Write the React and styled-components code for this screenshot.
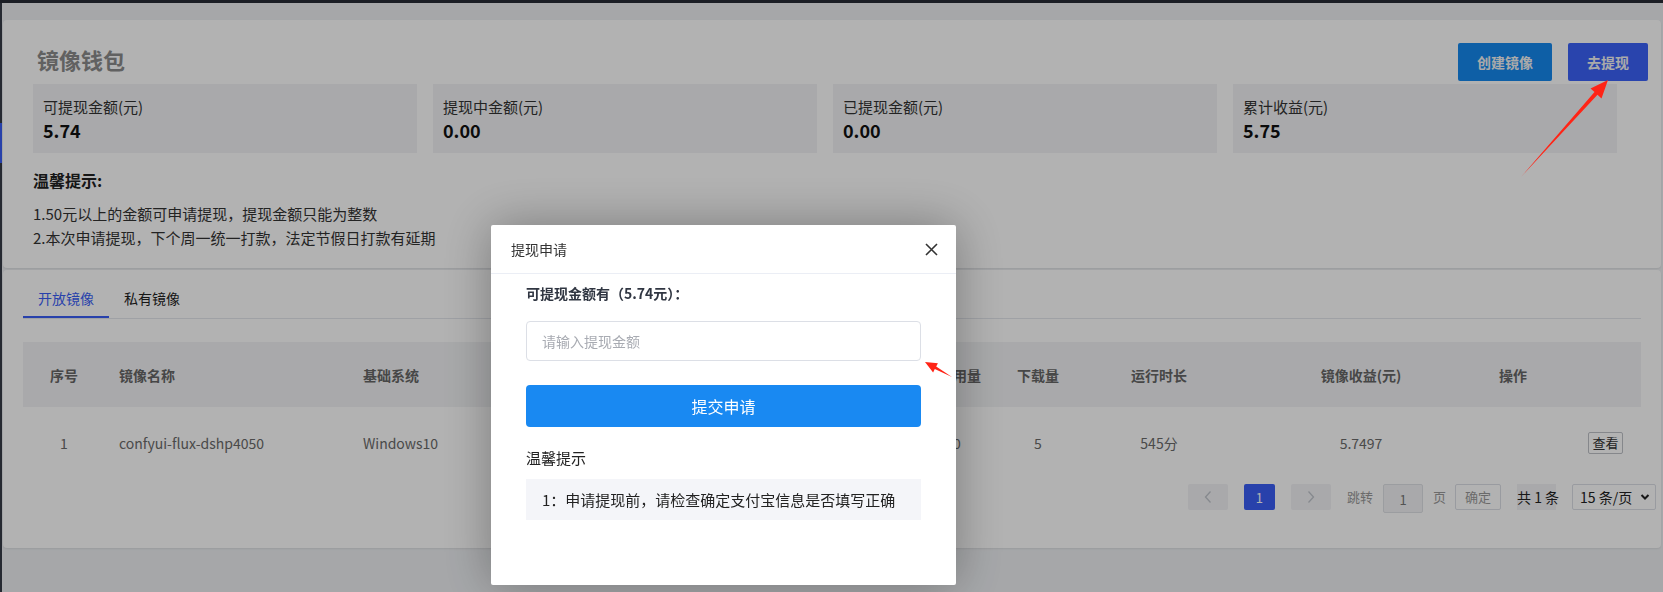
import React from "react";
import styled, { createGlobalStyle } from "styled-components";

const GlobalStyle = createGlobalStyle`
  html, body { margin: 0; padding: 0; }
  body {
    width: 1663px;
    height: 592px;
    overflow: hidden;
    background: #eef0f3;
    color: #333;
    font-family: "Noto Sans CJK SC", "Noto Sans", "Liberation Sans", sans-serif;
  }
  *, *::before, *::after { box-sizing: border-box; }
  #root { height: 592px; }
`;

/* ---------- page shell ---------- */

const Shell = styled.div`
  display: flex;
  flex-direction: column;
  height: 592px;
`;

const TopBar = styled.header`
  flex: none;
  height: 3px;
  background: #282c36;
`;

const Body = styled.div`
  flex: 1;
  display: flex;
  min-height: 0;
`;

const SideRail = styled.aside`
  flex: none;
  width: 2px;
  background: #363b47;
`;

const RailMark = styled.span`
  display: block;
  height: 40px;
  margin-top: 120px;
  background: #3a5ef5;
`;

const Main = styled.main`
  flex: 1;
  display: flex;
  flex-direction: column;
  gap: 2px;
  padding: 17px 2px 0 1px;
`;

const Card = styled.section`
  flex: none;
  height: ${(p) => p.$h}px;
  background: #fff;
  border-radius: 4px;
  box-shadow: 0 1px 2px rgba(0, 0, 0, 0.08);
`;

/* ---------- wallet summary ---------- */

const WalletCard = styled(Card)`
  padding: 23px 13px 0 30px;
`;

const HeaderRow = styled.div`
  display: flex;
  justify-content: space-between;
  align-items: flex-start;
  height: 38px;
`;

const Title = styled.h1`
  margin: 1px 0 0 4px;
  font-size: 22px;
  line-height: 30px;
  font-weight: 700;
  color: #8c8c8c;
`;

const Actions = styled.div`
  display: flex;
  gap: 16px;
`;

const ActionButton = styled.button`
  width: ${(p) => p.$w}px;
  height: 38px;
  border: none;
  border-radius: 2px;
  background: ${(p) => p.$bg};
  color: #f4f4f4;
  font-family: inherit;
  font-size: 14px;
  font-weight: 700;
  padding: 0;
`;

const StatsGrid = styled.div`
  display: grid;
  grid-template-columns: repeat(4, 1fr);
  gap: 16px;
  margin: 3px 31px 0 0;
`;

const StatBox = styled.div`
  height: 69px;
  padding: 12px 10px 11px 10px;
  background: #f2f3f5;
`;

const StatLabel = styled.div`
  font-size: 15px;
  line-height: 22px;
  color: #333;
`;

const StatValue = styled.div`
  font-size: 18px;
  line-height: 24px;
  font-weight: 700;
  color: #111;
`;

const NoticeTitle = styled.h3`
  margin: 15px 0 0;
  font-size: 16px;
  line-height: 24px;
  font-weight: 700;
  color: #222;
`;

const NoticeList = styled.div`
  margin-top: 10px;
`;

const NoticeLine = styled.p`
  margin: 0;
  font-size: 15px;
  line-height: 24px;
  color: #333;
`;

/* ---------- image list ---------- */

const ListCard = styled(Card)`
  padding: 8px 20px 0;
`;

const TabBar = styled.nav`
  display: flex;
  height: 41px;
  border-bottom: 1px solid #e4e7ed;
`;

const Tab = styled.div`
  position: relative;
  height: 40px;
  padding: 0 15px;
  font-size: 14px;
  line-height: 40px;
  color: ${(p) => (p.$active ? "#3a5ef5" : "#222")};
  &::after {
    content: "";
    position: absolute;
    left: 0;
    right: 0;
    bottom: 0;
    height: 2px;
    background: ${(p) => (p.$active ? "#3a5ef5" : "transparent")};
  }
`;

const COLUMNS = "82px 245px 250px 310px 94px 68px 174px 230px 165px";

const TableHead = styled.div`
  display: grid;
  grid-template-columns: ${COLUMNS};
  align-items: center;
  height: 65px;
  margin-top: 23px;
  background: #f2f3f5;
  font-size: 14px;
  font-weight: 700;
  color: #666;
`;

const TableRow = styled.div`
  display: grid;
  grid-template-columns: ${COLUMNS};
  align-items: center;
  height: 72px;
  font-size: 14px;
  color: #6a6a6a;
`;

const Cell = styled.div`
  display: flex;
  justify-content: ${(p) => (p.$align === "left" ? "flex-start" : p.$align === "right" ? "flex-end" : "center")};
  padding-left: ${(p) => p.$pl || 0}px;
  padding-right: ${(p) => p.$pr || 0}px;
  white-space: nowrap;
`;

const ViewButton = styled.button`
  width: 35px;
  height: 22px;
  padding: 0;
  border: 1px solid #bfc2c8;
  border-radius: 2px;
  background: #fff;
  color: #333;
  font-family: inherit;
  font-size: 13px;
  line-height: 20px;
`;

/* ---------- pagination ---------- */

const Pager = styled.div`
  display: flex;
  justify-content: flex-end;
  align-items: flex-start;
  gap: 16px;
  margin: 5px -15px 0 0;
  font-size: 13px;
`;

const PagerGroup = styled.div`
  display: flex;
  align-items: flex-start;
  gap: ${(p) => p.$gap}px;
`;

const PageBtn = styled.div`
  display: flex;
  align-items: center;
  justify-content: center;
  width: ${(p) => p.$w}px;
  height: 26px;
  border-radius: 2px;
  background: ${(p) => (p.$active ? "#3a5ef5" : "#f2f3f5")};
  color: ${(p) => (p.$active ? "#fff" : "#c0c4cc")};
  font-size: 13px;
`;

const PagerText = styled.span`
  height: 26px;
  line-height: 26px;
  color: ${(p) => p.$color || "#9a9a9a"};
  margin-right: ${(p) => p.$mr || 0}px;
`;

const JumpInput = styled.div`
  width: 40px;
  height: 29px;
  padding-top: 3px;
  border: 1px solid #dfe1e5;
  border-radius: 2px;
  background: #f2f3f5;
  color: #777;
  text-align: center;
  line-height: 24px;
`;

const ConfirmBtn = styled.div`
  width: 46px;
  height: 26px;
  border: 1px solid #dcdfe6;
  border-radius: 2px;
  color: #999;
  text-align: center;
  line-height: 24px;
`;

const TotalChip = styled.div`
  width: 39px;
  height: 26px;
  background: #f2f3f5;
  color: #222;
  text-align: center;
  line-height: 26px;
  font-size: 14px;
  white-space: nowrap;
`;

const SizeSelect = styled.div`
  display: flex;
  align-items: center;
  justify-content: space-between;
  width: 84px;
  height: 26px;
  padding: 0 5px 0 7px;
  border: 1px solid #dcdfe6;
  border-radius: 2px;
  background: #fff;
  color: #222;
  font-size: 14px;
  white-space: nowrap;
`;

/* ---------- dialog ---------- */

const Backdrop = styled.div`
  position: fixed;
  inset: 0;
  z-index: 10;
  background: rgba(0, 0, 0, 0.3);
`;

const Dialog = styled.div`
  position: absolute;
  left: 491px;
  top: 225px;
  width: 465px;
  height: 360px;
  background: #fff;
  border-radius: 2px;
  box-shadow: 0 0 50px rgba(0, 0, 0, 0.32);
`;

const DialogHeader = styled.div`
  display: flex;
  align-items: center;
  justify-content: space-between;
  height: 49px;
  padding: 0 18px 0 20px;
  border-bottom: 1px solid #ebeef5;
`;

const DialogTitle = styled.span`
  font-size: 14px;
  line-height: 20px;
  color: #333;
`;

const DialogBody = styled.div`
  padding: 8px 35px 0;
`;

const Available = styled.div`
  font-size: 14px;
  line-height: 22px;
  font-weight: 700;
  color: #303642;
`;

const AmountInput = styled.input`
  display: block;
  width: 100%;
  height: 40px;
  margin-top: 17px;
  padding: 0 15px;
  border: 1px solid #dcdfe6;
  border-radius: 4px;
  font-family: inherit;
  font-size: 14px;
  outline: none;
  &::placeholder { color: #a8abb2; }
`;

const SubmitButton = styled.button`
  display: block;
  width: 100%;
  height: 42px;
  margin-top: 24px;
  border: none;
  border-radius: 4px;
  background: #1989f2;
  color: #fff;
  font-family: inherit;
  font-size: 16px;
`;

const TipTitle = styled.div`
  margin-top: 20px;
  font-size: 15px;
  line-height: 22px;
  color: #222;
`;

const TipBox = styled.div`
  display: flex;
  align-items: center;
  height: 41px;
  margin-top: 10px;
  padding: 0 16px;
  background: #f4f5f9;
  font-size: 15px;
  color: #222;
`;

const Annotations = styled.svg`
  position: fixed;
  left: 0;
  top: 0;
  z-index: 20;
  pointer-events: none;
`;

/* ---------- data ---------- */

const stats = [
  { label: "可提现金额(元)", value: "5.74" },
  { label: "提现中金额(元)", value: "0.00" },
  { label: "已提现金额(元)", value: "0.00" },
  { label: "累计收益(元)", value: "5.75" },
];

const columns = [
  { title: "序号" },
  { title: "镜像名称", align: "left", pl: 14 },
  { title: "基础系统", align: "left", pl: 13 },
  { title: "创建时间" },
  { title: "使用量", pl: 6 },
  { title: "下载量" },
  { title: "运行时长" },
  { title: "镜像收益(元)" },
  { title: "操作", align: "left", pl: 23 },
];

const row = ["1", "confyui-flux-dshp4050", "Windows10", "2024-12-18 15:32", "0", "5", "545分", "5.7497"];

const Chevron = ({ dir }) => (
  <svg width="10" height="14" viewBox="0 0 10 14" fill="none">
    <path
      d={dir === "left" ? "M7.5 1.5 L2.5 7 L7.5 12.5" : "M2.5 1.5 L7.5 7 L2.5 12.5"}
      stroke="#c0c4cc"
      strokeWidth="1.3"
    />
  </svg>
);

const CaretDown = () => (
  <svg width="10" height="8" viewBox="0 0 10 8" fill="none">
    <path d="M1.5 2 L5 5.5 L8.5 2" stroke="#222" strokeWidth="2" />
  </svg>
);

const CloseIcon = () => (
  <svg width="13" height="13" viewBox="0 0 13 13" fill="none">
    <path d="M1 1 L12 12 M12 1 L1 12" stroke="#333" strokeWidth="1.6" />
  </svg>
);

export default function App() {
  return (
    <>
      <GlobalStyle />
      <Shell>
        <TopBar />
        <Body>
          <SideRail>
            <RailMark />
          </SideRail>
          <Main>
            <WalletCard $h={248}>
              <HeaderRow>
                <Title>镜像钱包</Title>
                <Actions>
                  <ActionButton $w={94} $bg="#1588ee">创建镜像</ActionButton>
                  <ActionButton $w={80} $bg="#3c62f8">去提现</ActionButton>
                </Actions>
              </HeaderRow>
              <StatsGrid>
                {stats.map((s) => (
                  <StatBox key={s.label}>
                    <StatLabel>{s.label}</StatLabel>
                    <StatValue>{s.value}</StatValue>
                  </StatBox>
                ))}
              </StatsGrid>
              <NoticeTitle>温馨提示:</NoticeTitle>
              <NoticeList>
                <NoticeLine>1.50元以上的金额可申请提现，提现金额只能为整数</NoticeLine>
                <NoticeLine>2.本次申请提现，下个周一统一打款，法定节假日打款有延期</NoticeLine>
              </NoticeList>
            </WalletCard>

            <ListCard $h={278}>
              <TabBar>
                <Tab $active>开放镜像</Tab>
                <Tab>私有镜像</Tab>
              </TabBar>
              <TableHead>
                {columns.map((c) => (
                  <Cell key={c.title} $align={c.align} $pl={c.pl}>
                    {c.title}
                  </Cell>
                ))}
              </TableHead>
              <TableRow>
                {row.map((v, i) => (
                  <Cell key={i} $align={columns[i].align} $pl={columns[i].align ? columns[i].pl : 0}>
                    {v}
                  </Cell>
                ))}
                <Cell $align="right" $pr={18}>
                  <ViewButton>查看</ViewButton>
                </Cell>
              </TableRow>
              <Pager>
                <PagerGroup $gap={16}>
                  <PageBtn $w={40}><Chevron dir="left" /></PageBtn>
                  <PageBtn $w={31} $active>1</PageBtn>
                  <PageBtn $w={40}><Chevron dir="right" /></PageBtn>
                </PagerGroup>
                <PagerGroup $gap={10}>
                  <PagerText>跳转</PagerText>
                  <JumpInput>1</JumpInput>
                  <PagerText $mr={-1}>页</PagerText>
                  <ConfirmBtn>确定</ConfirmBtn>
                </PagerGroup>
                <TotalChip>共 1 条</TotalChip>
                <SizeSelect>
                  <span>15 条/页</span>
                  <CaretDown />
                </SizeSelect>
              </Pager>
            </ListCard>
          </Main>
        </Body>
      </Shell>

      <Backdrop>
        <Dialog>
          <DialogHeader>
            <DialogTitle>提现申请</DialogTitle>
            <CloseIcon />
          </DialogHeader>
          <DialogBody>
            <Available>可提现金额有（5.74元）：</Available>
            <AmountInput placeholder="请输入提现金额" />
            <SubmitButton>提交申请</SubmitButton>
            <TipTitle>温馨提示</TipTitle>
            <TipBox>1：申请提现前，请检查确定支付宝信息是否填写正确</TipBox>
          </DialogBody>
        </Dialog>
      </Backdrop>

      <Annotations width="1663" height="592" viewBox="0 0 1663 592">
        <polygon
          fill="#ff2416"
          points="1521,177 1597.5,94.7 1601.5,98.5 1608,80 1590.5,88.5 1594.5,92.1"
        />
        <polygon
          fill="#ff2416"
          points="952,377 936.2,366.5 937.9,363.2 925,362 933.1,372.4 934.8,369.1"
        />
      </Annotations>
    </>
  );
}
